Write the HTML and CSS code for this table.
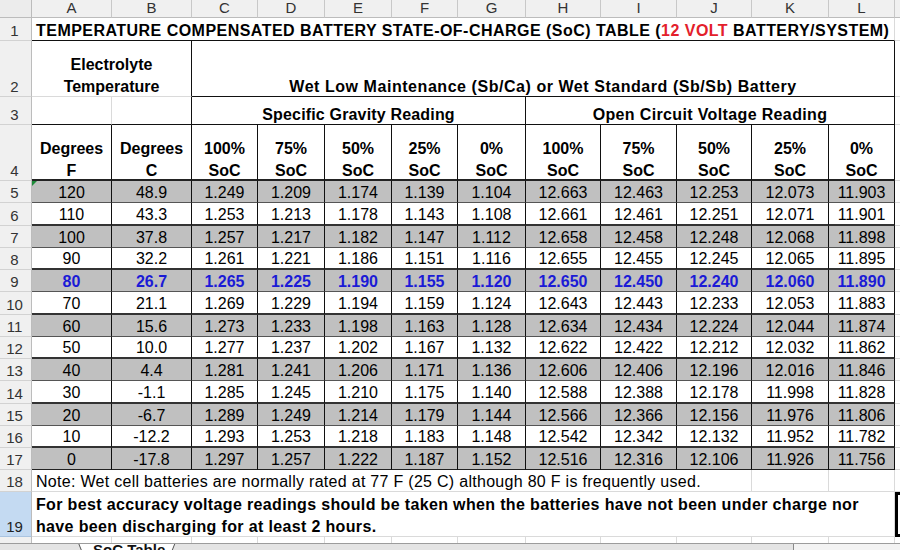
FILE: index.html
```html
<!DOCTYPE html>
<html>
<head>
<meta charset="utf-8">
<title>SoC Table</title>
<link rel="stylesheet" href="styles.css">
</head>
<body>
<div class="view">
<div class="sheet">
  <div class="row">
    <div class="corner"></div>
    <div class="ch">A</div><div class="ch">B</div><div class="ch">C</div><div class="ch">D</div><div class="ch">E</div><div class="ch">F</div><div class="ch">G</div><div class="ch">H</div><div class="ch">I</div><div class="ch">J</div><div class="ch">K</div><div class="ch">L</div><div class="ch"></div>
  </div>

  <div class="row">
    <div class="rh">1</div>
    <div class="c title span12 bb"><span>TEMPERATURE COMPENSATED BATTERY STATE-OF-CHARGE (SoC) TABLE (<span class="red">12 VOLT</span> BATTERY/SYSTEM)</span></div>
    <div class="c"></div>
  </div>

  <div class="row">
    <div class="rh">2</div>
    <div class="c b two span2 br"><span>Electrolyte<br>Temperature</span></div>
    <div class="c b wet span10 br bb">Wet Low Maintenance (Sb/Ca) or Wet Standard (Sb/Sb) Battery</div>
    <div class="c"></div>
  </div>

  <div class="row">
    <div class="rh">3</div>
    <div class="c bb"></div>
    <div class="c bb br"></div>
    <div class="c b sg span5 br bb">Specific Gravity Reading</div>
    <div class="c b ocv span5 br bb">Open Circuit Voltage Reading</div>
    <div class="c"></div>
  </div>

  <div class="row hdr">
    <div class="rh">4</div>
    <div class="c"><span>Degrees<br>F</span></div>
    <div class="c"><span>Degrees<br>C</span></div>
    <div class="c"><span>100%<br>SoC</span></div>
    <div class="c"><span>75%<br>SoC</span></div>
    <div class="c"><span>50%<br>SoC</span></div>
    <div class="c"><span>25%<br>SoC</span></div>
    <div class="c"><span>0%<br>SoC</span></div>
    <div class="c"><span>100%<br>SoC</span></div>
    <div class="c"><span>75%<br>SoC</span></div>
    <div class="c"><span>50%<br>SoC</span></div>
    <div class="c"><span>25%<br>SoC</span></div>
    <div class="c"><span>0%<br>SoC</span></div>
    <div class="c"></div>
  </div>

  <div class="row data g">
    <div class="rh">5</div>
    <div class="c flag">120</div><div class="c">48.9</div><div class="c">1.249</div><div class="c">1.209</div><div class="c">1.174</div><div class="c">1.139</div><div class="c">1.104</div><div class="c">12.663</div><div class="c">12.463</div><div class="c">12.253</div><div class="c">12.073</div><div class="c">11.903</div>
    <div class="c m"></div>
  </div>
  <div class="row data tk">
    <div class="rh">6</div>
    <div class="c">110</div><div class="c">43.3</div><div class="c">1.253</div><div class="c">1.213</div><div class="c">1.178</div><div class="c">1.143</div><div class="c">1.108</div><div class="c">12.661</div><div class="c">12.461</div><div class="c">12.251</div><div class="c">12.071</div><div class="c">11.901</div>
    <div class="c m"></div>
  </div>
  <div class="row data g">
    <div class="rh">7</div>
    <div class="c">100</div><div class="c">37.8</div><div class="c">1.257</div><div class="c">1.217</div><div class="c">1.182</div><div class="c">1.147</div><div class="c">1.112</div><div class="c">12.658</div><div class="c">12.458</div><div class="c">12.248</div><div class="c">12.068</div><div class="c">11.898</div>
    <div class="c m"></div>
  </div>
  <div class="row data tk">
    <div class="rh">8</div>
    <div class="c">90</div><div class="c">32.2</div><div class="c">1.261</div><div class="c">1.221</div><div class="c">1.186</div><div class="c">1.151</div><div class="c">1.116</div><div class="c">12.655</div><div class="c">12.455</div><div class="c">12.245</div><div class="c">12.065</div><div class="c">11.895</div>
    <div class="c m"></div>
  </div>
  <div class="row data g hl">
    <div class="rh">9</div>
    <div class="c">80</div><div class="c">26.7</div><div class="c">1.265</div><div class="c">1.225</div><div class="c">1.190</div><div class="c">1.155</div><div class="c">1.120</div><div class="c">12.650</div><div class="c">12.450</div><div class="c">12.240</div><div class="c">12.060</div><div class="c">11.890</div>
    <div class="c m"></div>
  </div>
  <div class="row data tk">
    <div class="rh">10</div>
    <div class="c">70</div><div class="c">21.1</div><div class="c">1.269</div><div class="c">1.229</div><div class="c">1.194</div><div class="c">1.159</div><div class="c">1.124</div><div class="c">12.643</div><div class="c">12.443</div><div class="c">12.233</div><div class="c">12.053</div><div class="c">11.883</div>
    <div class="c m"></div>
  </div>
  <div class="row data g">
    <div class="rh">11</div>
    <div class="c">60</div><div class="c">15.6</div><div class="c">1.273</div><div class="c">1.233</div><div class="c">1.198</div><div class="c">1.163</div><div class="c">1.128</div><div class="c">12.634</div><div class="c">12.434</div><div class="c">12.224</div><div class="c">12.044</div><div class="c">11.874</div>
    <div class="c m"></div>
  </div>
  <div class="row data tk">
    <div class="rh">12</div>
    <div class="c">50</div><div class="c">10.0</div><div class="c">1.277</div><div class="c">1.237</div><div class="c">1.202</div><div class="c">1.167</div><div class="c">1.132</div><div class="c">12.622</div><div class="c">12.422</div><div class="c">12.212</div><div class="c">12.032</div><div class="c">11.862</div>
    <div class="c m"></div>
  </div>
  <div class="row data g">
    <div class="rh">13</div>
    <div class="c">40</div><div class="c">4.4</div><div class="c">1.281</div><div class="c">1.241</div><div class="c">1.206</div><div class="c">1.171</div><div class="c">1.136</div><div class="c">12.606</div><div class="c">12.406</div><div class="c">12.196</div><div class="c">12.016</div><div class="c">11.846</div>
    <div class="c m"></div>
  </div>
  <div class="row data tk">
    <div class="rh">14</div>
    <div class="c">30</div><div class="c">-1.1</div><div class="c">1.285</div><div class="c">1.245</div><div class="c">1.210</div><div class="c">1.175</div><div class="c">1.140</div><div class="c">12.588</div><div class="c">12.388</div><div class="c">12.178</div><div class="c">11.998</div><div class="c">11.828</div>
    <div class="c m"></div>
  </div>
  <div class="row data g">
    <div class="rh">15</div>
    <div class="c">20</div><div class="c">-6.7</div><div class="c">1.289</div><div class="c">1.249</div><div class="c">1.214</div><div class="c">1.179</div><div class="c">1.144</div><div class="c">12.566</div><div class="c">12.366</div><div class="c">12.156</div><div class="c">11.976</div><div class="c">11.806</div>
    <div class="c m"></div>
  </div>
  <div class="row data tk">
    <div class="rh">16</div>
    <div class="c">10</div><div class="c">-12.2</div><div class="c">1.293</div><div class="c">1.253</div><div class="c">1.218</div><div class="c">1.183</div><div class="c">1.148</div><div class="c">12.542</div><div class="c">12.342</div><div class="c">12.132</div><div class="c">11.952</div><div class="c">11.782</div>
    <div class="c m"></div>
  </div>
  <div class="row data g last">
    <div class="rh">17</div>
    <div class="c">0</div><div class="c">-17.8</div><div class="c">1.297</div><div class="c">1.257</div><div class="c">1.222</div><div class="c">1.187</div><div class="c">1.152</div><div class="c">12.516</div><div class="c">12.316</div><div class="c">12.106</div><div class="c">11.926</div><div class="c">11.756</div>
    <div class="c m"></div>
  </div>

  <div class="row">
    <div class="rh">18</div>
    <div class="c note span10">Note: Wet cell batteries are normally rated at 77 F (25 C) although 80 F is frequently used.</div>
    <div class="c"></div><div class="c"></div><div class="c"></div>
  </div>

  <div class="row">
    <div class="rh sel">19</div>
    <div class="c b two left advice span12"><span>For best accuracy voltage readings should be taken when the batteries have not been under charge nor<br>have been discharging for at least 2 hours.</span></div>
    <div class="c active"></div>
  </div>

  <div class="row">
    <div class="rh">20</div>
    <div class="c"></div><div class="c"></div><div class="c"></div><div class="c"></div><div class="c"></div><div class="c"></div><div class="c"></div><div class="c"></div><div class="c"></div><div class="c"></div><div class="c"></div><div class="c"></div><div class="c"></div>
  </div>
</div>
</div>
<div class="tabs">
  <div class="tab"><div class="tab-in">SoC Table</div></div>
  <div class="hscroll"></div>
</div>
</body>
</html>
```

FILE: styles.css
```css
* { box-sizing: border-box; }
html, body {
  margin: 0;
  padding: 0;
  width: 900px;
  height: 550px;
  overflow: hidden;
  background: #fff;
}
body {
  font-family: "Liberation Sans", Arial, sans-serif;
  font-size: 16px;
  color: #000;
}
.view {
  height: 543px;
  overflow: hidden;
}
.sheet {
  display: grid;
  width: 915px;
  grid-template-columns: 32px 80px 80px 66px 67px 67px 66px 68px 75px 76px 75px 77px 66px 20px;
  grid-template-rows: 18px 23px 56px 28px 56px repeat(13, 22.25px) 22px 45px 22px;
}
.row { display: contents; }

.corner {
  background: #ececec;
  border-right: 1px solid #bcbcbc;
  border-bottom: 1px solid #bcbcbc;
}
.ch {
  background: #f0f0f0;
  border-right: 1px solid #c8c8c8;
  border-bottom: 1px solid #bcbcbc;
  font-size: 15px;
  color: #333;
  line-height: 18px;
  display: flex;
  align-items: flex-end;
  justify-content: center;
}
.rh {
  background: #f0f0f0;
  border-right: 1px solid #bcbcbc;
  border-bottom: 1px solid #d2d2d2;
  font-size: 15px;
  color: #333;
  line-height: 18px;
  display: flex;
  align-items: flex-end;
  justify-content: center;
  padding-right: 2px;
}
.rh.sel {
  background: #c4daf2;
  color: #222;
  border-bottom-color: #aac4e0;
}

.c {
  border-right: 1px solid #dadada;
  border-bottom: 1px solid #dadada;
  display: flex;
  align-items: flex-end;
  justify-content: center;
  line-height: 18px;
  white-space: nowrap;
  text-align: center;
}
.b { font-weight: bold; }
.two { line-height: 22px; }
.two > span { margin-bottom: -2px; }
.left { justify-content: flex-start; text-align: left; padding-left: 4px; }

.span2 { grid-column: span 2; }
.span5 { grid-column: span 5; }
.span10 { grid-column: span 10; }
.span12 { grid-column: span 12; }

.br { border-right: 1px solid #111; }
.bb { border-bottom: 1px solid #111; }

.title {
  font-weight: bold;
  justify-content: flex-start;
  padding-left: 4px;
  letter-spacing: 0.47px;
}
.red { color: #e3202b; }
.wet { letter-spacing: 0.55px; }
.sg { letter-spacing: 0.17px; }
.ocv { letter-spacing: 0.36px; }
.advice { letter-spacing: 0.35px; }

/* header row 4 */
.hdr .c {
  font-weight: bold;
  line-height: 22px;
  border-right: 1px solid #111;
  border-bottom: 2px solid #222;
}
.hdr .c > span { margin-bottom: -3px; }
.hdr .c:last-child {
  font-weight: normal;
  border-right: 1px solid #dadada;
  border-bottom: 1px solid #dadada;
}

/* data rows */
.data .c {
  border-right: 1px solid #111;
  border-bottom: 1px solid #555;
}
.data.tk .c { border-bottom: 2px solid #333; }
.data.last .c { border-bottom: 1px solid #222; }
.data.g .c { background: #c0c0c0; }
.data .c.m {
  background: #fff;
  border-right: 1px solid #dadada;
  border-bottom: 1px solid #dadada;
}
.data.hl .c { color: #1b1bd6; font-weight: bold; }

.flag { position: relative; }
.flag::before {
  content: "";
  position: absolute;
  left: 0;
  top: 0;
  border-top: 5px solid #1e8c3a;
  border-right: 5px solid transparent;
}

.note {
  justify-content: flex-start;
  padding-left: 4px;
  letter-spacing: 0.29px;
}
.active {
  border: 3px solid #000;
  border-right: none;
}

.tabs {
  height: 7px;
  background: #e4e4e4;
  border-top: 1px solid #9c9c9c;
  display: flex;
  padding-left: 78px;
  overflow: hidden;
}
.tab {
  width: 100px;
  height: 10px;
  background: #555;
  clip-path: polygon(0 0, 100% 0, calc(100% - 4px) 100%, 4px 100%);
  margin-top: -1px;
}
.tab-in {
  height: 100%;
  margin: 0 1px;
  background: #fff;
  clip-path: polygon(0 0, 100% 0, calc(100% - 4px) 100%, 4px 100%);
  font-weight: bold;
  font-size: 15px;
  line-height: 14px;
  padding-left: 14px;
  color: #111;
  white-space: nowrap;
}
.hscroll {
  margin-left: 617px;
  width: 110px;
  background: #f3f3f3;
  border-left: 1px solid #8a8a8a;
}
```
